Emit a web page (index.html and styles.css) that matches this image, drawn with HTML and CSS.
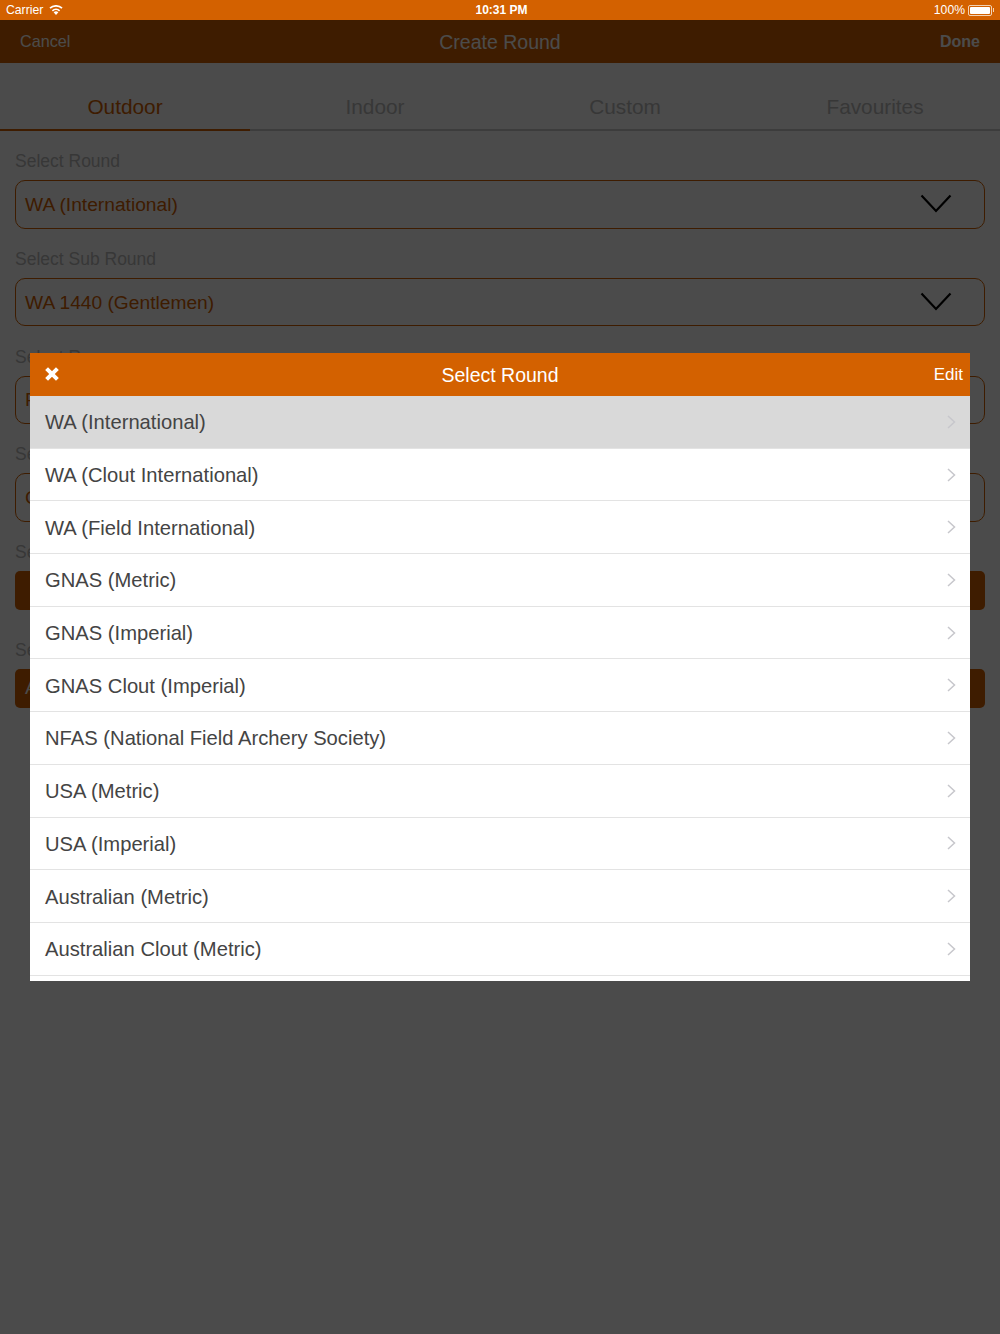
FILE: index.html
```html
<!DOCTYPE html>
<html>
<head>
  <link rel="stylesheet" href="styles.css">
</head>
<body>
  <div class="status-bar">
    <div class="status-left">
      <span>Carrier</span>
      <svg class="wifi" width="14" height="10" viewBox="0 0 14 10">
        <path d="M7 10 L4.6 7.3 A3.5 3.5 0 0 1 9.4 7.3 Z" fill="#fff"/>
        <path d="M3.4 5.8 A5.3 5.3 0 0 1 10.6 5.8" fill="none" stroke="#fff" stroke-width="1.7"/>
        <path d="M1 3.2 A8.8 8.8 0 0 1 13 3.2" fill="none" stroke="#fff" stroke-width="1.7"/>
      </svg>
    </div>
    <div class="status-time">10:31 PM</div>
    <div class="status-right">
      <span>100%</span>
      <div class="battery"><div class="battery-fill"></div></div>
      <div class="battery-tip"></div>
    </div>
  </div>

  <div class="page">
    <div class="navbar">
      <span class="nav-cancel">Cancel</span>
      <span class="nav-title">Create Round</span>
      <span class="nav-done">Done</span>
    </div>

    <div class="tabs">
      <div class="tab active">Outdoor</div>
      <div class="tab">Indoor</div>
      <div class="tab">Custom</div>
      <div class="tab">Favourites</div>
    </div>

    <div class="form">
      <div class="field">
        <label>Select Round</label>
        <div class="select">
          <span>WA (International)</span>
          <svg class="select-arrow" width="32" height="20" viewBox="0 0 32 20"><path d="M1.5 1.5 L16 17 L30.5 1.5" fill="none" stroke="#000" stroke-width="2.2"/></svg>
        </div>
      </div>
      <div class="field">
        <label>Select Sub Round</label>
        <div class="select">
          <span>WA 1440 (Gentlemen)</span>
          <svg class="select-arrow" width="32" height="20" viewBox="0 0 32 20"><path d="M1.5 1.5 L16 17 L30.5 1.5" fill="none" stroke="#000" stroke-width="2.2"/></svg>
        </div>
      </div>
      <div class="field">
        <label>Select R</label>
        <div class="select"><span>Full</span></div>
      </div>
      <div class="field">
        <label>Select</label>
        <div class="select"><span>C</span></div>
      </div>
      <div class="field">
        <label>Select</label>
        <div class="btn"></div>
      </div>
      <div class="field">
        <label>Select</label>
        <div class="btn"><span>A</span></div>
      </div>
    </div>
  </div>

  <div class="overlay"></div>

  <div class="modal">
    <div class="modal-header">
      <svg class="modal-close" width="14" height="14" viewBox="0 0 14 14"><path d="M1.6 1.6 L12.4 12.4 M12.4 1.6 L1.6 12.4" fill="none" stroke="#fff" stroke-width="4"/></svg>
      <span class="modal-title">Select Round</span>
      <span class="modal-edit">Edit</span>
    </div>
    <ul class="round-list">
      <li class="selected">WA (International)<svg class="chevron" width="9" height="14" viewBox="0 0 9 14"><path d="M1 1 L7.5 7 L1 13" fill="none" stroke="#c7c7cc" stroke-width="1.5"/></svg></li>
      <li>WA (Clout International)<svg class="chevron" width="9" height="14" viewBox="0 0 9 14"><path d="M1 1 L7.5 7 L1 13" fill="none" stroke="#c7c7cc" stroke-width="1.5"/></svg></li>
      <li>WA (Field International)<svg class="chevron" width="9" height="14" viewBox="0 0 9 14"><path d="M1 1 L7.5 7 L1 13" fill="none" stroke="#c7c7cc" stroke-width="1.5"/></svg></li>
      <li>GNAS (Metric)<svg class="chevron" width="9" height="14" viewBox="0 0 9 14"><path d="M1 1 L7.5 7 L1 13" fill="none" stroke="#c7c7cc" stroke-width="1.5"/></svg></li>
      <li>GNAS (Imperial)<svg class="chevron" width="9" height="14" viewBox="0 0 9 14"><path d="M1 1 L7.5 7 L1 13" fill="none" stroke="#c7c7cc" stroke-width="1.5"/></svg></li>
      <li>GNAS Clout (Imperial)<svg class="chevron" width="9" height="14" viewBox="0 0 9 14"><path d="M1 1 L7.5 7 L1 13" fill="none" stroke="#c7c7cc" stroke-width="1.5"/></svg></li>
      <li>NFAS (National Field Archery Society)<svg class="chevron" width="9" height="14" viewBox="0 0 9 14"><path d="M1 1 L7.5 7 L1 13" fill="none" stroke="#c7c7cc" stroke-width="1.5"/></svg></li>
      <li>USA (Metric)<svg class="chevron" width="9" height="14" viewBox="0 0 9 14"><path d="M1 1 L7.5 7 L1 13" fill="none" stroke="#c7c7cc" stroke-width="1.5"/></svg></li>
      <li>USA (Imperial)<svg class="chevron" width="9" height="14" viewBox="0 0 9 14"><path d="M1 1 L7.5 7 L1 13" fill="none" stroke="#c7c7cc" stroke-width="1.5"/></svg></li>
      <li>Australian (Metric)<svg class="chevron" width="9" height="14" viewBox="0 0 9 14"><path d="M1 1 L7.5 7 L1 13" fill="none" stroke="#c7c7cc" stroke-width="1.5"/></svg></li>
      <li>Australian Clout (Metric)<svg class="chevron" width="9" height="14" viewBox="0 0 9 14"><path d="M1 1 L7.5 7 L1 13" fill="none" stroke="#c7c7cc" stroke-width="1.5"/></svg></li>
    </ul>
  </div>
</body>
</html>
```

FILE: styles.css
```css
* {
  box-sizing: border-box;
}
html, body {
  height: 100%;
}
body {
  margin: 0;
  height: 1334px;
  overflow: hidden;
  position: relative;
  background-color: #fff;
  color: #333;
  font-family: "Liberation Sans", Arial, sans-serif;
}

/* status bar stays above the dimmed layer */
.status-bar {
  position: relative;
  z-index: 3;
  height: 20px;
  padding: 0 6px;
  display: grid;
  grid-template-columns: 1fr auto 1fr;
  align-items: center;
  background-color: #d36100;
  color: #fff;
  font-size: 12.2px;
}
.status-left {
  display: flex;
  align-items: center;
  gap: 6px;
}
.status-time {
  font-weight: bold;
  font-size: 12px;
  padding-left: 3px;
}
.status-right {
  display: flex;
  align-items: center;
  justify-content: flex-end;
}
.battery {
  width: 24px;
  height: 11px;
  margin-left: 3px;
  padding: 1px;
  border: 1px solid #f3d3b5;
  border-radius: 2px;
}
.battery-fill {
  height: 100%;
  background-color: #fff;
  border-radius: 1px;
}
.battery-tip {
  width: 1px;
  height: 4px;
  margin-left: 1px;
  background-color: #f3d3b5;
}

.navbar {
  height: 43px;
  padding: 0 20px;
  display: grid;
  grid-template-columns: 1fr auto 1fr;
  align-items: center;
  background-color: #d36100;
  color: #fff;
}
.nav-cancel {
  font-size: 16.2px;
}
.nav-title {
  margin-top: 2px;
  font-size: 19.5px;
}
.nav-done {
  text-align: right;
  font-size: 16px;
  font-weight: bold;
}

.tabs {
  height: 68px;
  display: grid;
  grid-template-columns: repeat(4, 1fr);
  border-bottom: 2px solid #ccc;
}
.tab {
  height: 68px;
  padding-top: 32px;
  text-align: center;
  font-size: 20.8px;
  color: #bbb;
}
.tab.active {
  color: #d36100;
  border-bottom: 2px solid #d36100;
}

.form {
  padding: 20px 15px 0;
  display: flex;
  flex-direction: column;
  gap: 20.25px;
}
.field {
  min-height: 77.5px;
}
.field label {
  display: block;
  height: 20px;
  line-height: 20px;
  margin-bottom: 9px;
  font-size: 17.5px;
  color: #bbb;
}
.select {
  height: 48.5px;
  padding: 1px 9px 0;
  display: flex;
  align-items: center;
  justify-content: space-between;
  border: 1px solid #d36100;
  border-radius: 10px;
  font-size: 19.2px;
  color: #d36100;
}
.select-arrow {
  margin-right: 23px;
  margin-bottom: 1px;
}
.btn {
  height: 39px;
  padding: 0 10px;
  display: flex;
  align-items: center;
  background-color: #d36100;
  border-radius: 5px;
  font-size: 19.2px;
  color: #fff;
}

.overlay {
  position: absolute;
  inset: 0;
  z-index: 1;
  background-color: rgba(0, 0, 0, 0.705);
}

.modal {
  position: absolute;
  top: 353px;
  left: 30px;
  z-index: 2;
  width: 940px;
  height: 628px;
  overflow: hidden;
  background-color: #fff;
}
.modal-header {
  position: relative;
  height: 43px;
  display: flex;
  align-items: center;
  justify-content: center;
  background-color: #d36100;
  color: #fff;
}
.modal-close {
  position: absolute;
  left: 15px;
  top: 14px;
}
.modal-title {
  margin-top: 2px;
  font-size: 19.5px;
}
.modal-edit {
  position: absolute;
  right: 7px;
  top: 12px;
  font-size: 17px;
}
.round-list {
  list-style: none;
  margin: 0;
  padding: 0;
}
.round-list li {
  height: 52.7px;
  padding: 2px 14px 0 15px;
  display: flex;
  align-items: center;
  justify-content: space-between;
  border-bottom: 1px solid #e3e3e3;
  font-size: 20.2px;
  color: #444;
}
.round-list li.selected {
  background-color: #d9d9d9;
}
.chevron {
  margin-bottom: 2px;
}
```
